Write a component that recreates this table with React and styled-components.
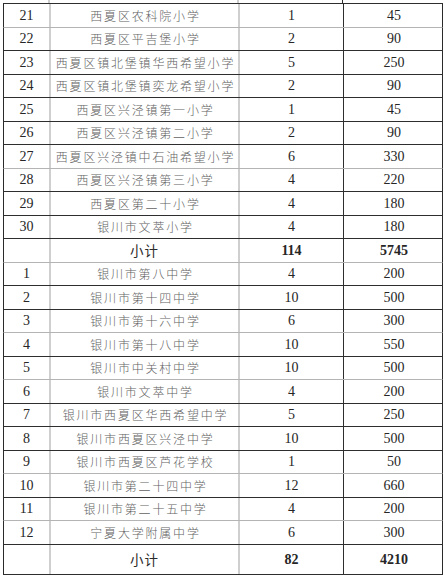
import React from "react";
import styled, { createGlobalStyle } from "styled-components";

const Global = createGlobalStyle`
  html, body { margin: 0; padding: 0; background: #fff; }
  body { width: 445px; height: 579px; overflow: hidden; }
`;

const Sheet = styled.div`
  padding: 0 2px 0 3px;
  width: 440px;
`;

const COLS = "47px 189px 104px 100px";

const Row = styled.div`
  display: grid;
  grid-template-columns: ${COLS};
  box-sizing: border-box;
  height: ${(p) => p.$h}px;
  border-bottom: 1px solid ${(p) => (p.$light ? "#b4b4b4" : "#2e2e2e")};
  border-left: ${(p) => (p.$stub ? "none" : "1px solid #2a2a2a")};
  border-right: ${(p) => (p.$stub ? "none" : "1px solid #2a2a2a")};
`;

const Cell = styled.div`
  display: flex;
  align-items: center;
  justify-content: center;
  box-sizing: border-box;
  white-space: nowrap;
  overflow: hidden;
  border-right: ${(p) =>
    p.$div === "light" ? "2px solid #cfcfcf" : p.$div === "dark" ? "1px solid #2e2e2e" : "none"};
`;

const Num = styled(Cell)`
  font-family: "Liberation Serif", "Times New Roman", serif;
  font-size: 14px;
  color: #262626;
  font-weight: ${(p) => (p.$bold ? 700 : 400)};
  padding-top: 1px;
`;

const Name = styled(Cell)`
  font-family: "Noto Sans CJK SC", sans-serif;
  font-size: 12px;
  font-weight: 300;
  letter-spacing: 1.8px;
  color: #626262;
  padding-left: 2px;
`;

const Total = styled(Cell)`
  font-family: "Noto Sans CJK SC", sans-serif;
  font-size: 13.5px;
  color: #2a2a2a;
  letter-spacing: 1px;
`;

const data = [
  { n: "21", s: "西夏区农科院小学", c: "1", p: "45", light: true },
  { n: "22", s: "西夏区平吉堡小学", c: "2", p: "90" },
  { n: "23", s: "西夏区镇北堡镇华西希望小学", c: "5", p: "250" },
  { n: "24", s: "西夏区镇北堡镇奕龙希望小学", c: "2", p: "90" },
  { n: "25", s: "西夏区兴泾镇第一小学", c: "1", p: "45" },
  { n: "26", s: "西夏区兴泾镇第二小学", c: "2", p: "90" },
  { n: "27", s: "西夏区兴泾镇中石油希望小学", c: "6", p: "330", light: true },
  { n: "28", s: "西夏区兴泾镇第三小学", c: "4", p: "220" },
  { n: "29", s: "西夏区第二十小学", c: "4", p: "180" },
  { n: "30", s: "银川市文萃小学", c: "4", p: "180" },
  { total: true, c: "114", p: "5745", light: true },
  { n: "1", s: "银川市第八中学", c: "4", p: "200" },
  { n: "2", s: "银川市第十四中学", c: "10", p: "500" },
  { n: "3", s: "银川市第十六中学", c: "6", p: "300", light: true },
  { n: "4", s: "银川市第十八中学", c: "10", p: "550" },
  { n: "5", s: "银川市中关村中学", c: "10", p: "500", light: true },
  { n: "6", s: "银川市文萃中学", c: "4", p: "200" },
  { n: "7", s: "银川市西夏区华西希望中学", c: "5", p: "250" },
  { n: "8", s: "银川市西夏区兴泾中学", c: "10", p: "500" },
  { n: "9", s: "银川市西夏区芦花学校", c: "1", p: "50", light: true },
  { n: "10", s: "银川市第二十四中学", c: "12", p: "660" },
  { n: "11", s: "银川市第二十五中学", c: "4", p: "200", light: true },
  { n: "12", s: "宁夏大学附属中学", c: "6", p: "300" },
  { total: true, c: "82", p: "4210", tall: true },
];

export default function App() {
  return (
    <Sheet>
      <Global />
      <Row $h={4} $stub>
        <Cell $div="light" />
        <Cell $div="light" />
        <Cell $div="dark" />
        <Cell />
      </Row>
      {data.map((r, i) => (
        <Row key={i} $h={r.tall ? 30 : 23.5} $light={r.light}>
          <Num $div="light">{r.total ? "" : r.n}</Num>
          {r.total ? (
            <Total $div="light">小计</Total>
          ) : (
            <Name $div="light">{r.s}</Name>
          )}
          <Num $div="dark" $bold={r.total}>
            {r.c}
          </Num>
          <Num $bold={r.total}>{r.p}</Num>
        </Row>
      ))}
    </Sheet>
  );
}
